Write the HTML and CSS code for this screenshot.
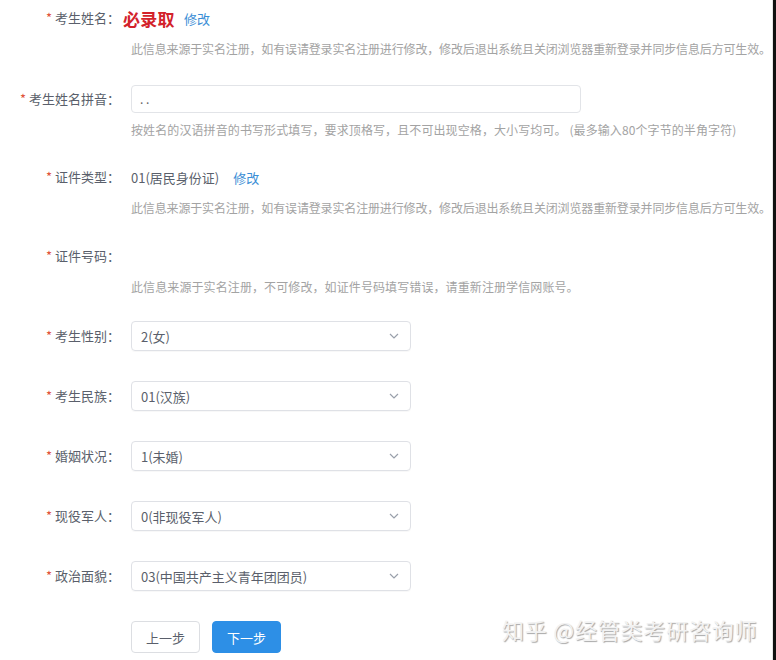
FILE: index.html
```html
<!DOCTYPE html>
<html lang="zh">
<head>
<meta charset="utf-8">
<title>考生信息</title>
<link rel="stylesheet" href="styles.css">
</head>
<body>
<div class="page">
  <form class="form">
    <div class="item item-a">
      <div class="label"><span class="req">*</span> 考生姓名：</div>
      <div class="content">
        <div class="value"><span class="name">必录取</span><a class="link link-a">修改</a></div>
        <div class="help help-long">此信息来源于实名注册，如有误请登录实名注册进行修改，修改后退出系统且关闭浏览器重新登录并同步信息后方可生效。</div>
      </div>
    </div>
    <div class="item item-b">
      <div class="label"><span class="req">*</span> 考生姓名拼音：</div>
      <div class="content">
        <div class="value"><div class="input">. .</div></div>
        <div class="help">按姓名的汉语拼音的书写形式填写，要求顶格写，且不可出现空格，大小写均可。 (最多输入80个字节的半角字符)</div>
      </div>
    </div>
    <div class="item item-c">
      <div class="label"><span class="req">*</span> 证件类型：</div>
      <div class="content">
        <div class="value"><span class="text">01(居民身份证)</span><a class="link link-c">修改</a></div>
        <div class="help help-long">此信息来源于实名注册，如有误请登录实名注册进行修改，修改后退出系统且关闭浏览器重新登录并同步信息后方可生效。</div>
      </div>
    </div>
    <div class="item item-d">
      <div class="label"><span class="req">*</span> 证件号码：</div>
      <div class="content">
        <div class="value"></div>
        <div class="help">此信息来源于实名注册，不可修改，如证件号码填写错误，请重新注册学信网账号。</div>
      </div>
    </div>
    <div class="item item-s">
      <div class="label"><span class="req">*</span> 考生性别：</div>
      <div class="content"><div class="value"><div class="select"><span>2(女)</span><svg class="arrow" width="10" height="6" viewBox="0 0 10 6"><path d="M1 1 L5 5 L9 1" fill="none" stroke="#9aa0ab" stroke-width="1.2"/></svg></div></div></div>
    </div>
    <div class="item item-s">
      <div class="label"><span class="req">*</span> 考生民族：</div>
      <div class="content"><div class="value"><div class="select"><span>01(汉族)</span><svg class="arrow" width="10" height="6" viewBox="0 0 10 6"><path d="M1 1 L5 5 L9 1" fill="none" stroke="#9aa0ab" stroke-width="1.2"/></svg></div></div></div>
    </div>
    <div class="item item-s">
      <div class="label"><span class="req">*</span> 婚姻状况：</div>
      <div class="content"><div class="value"><div class="select"><span>1(未婚)</span><svg class="arrow" width="10" height="6" viewBox="0 0 10 6"><path d="M1 1 L5 5 L9 1" fill="none" stroke="#9aa0ab" stroke-width="1.2"/></svg></div></div></div>
    </div>
    <div class="item item-s">
      <div class="label"><span class="req">*</span> 现役军人：</div>
      <div class="content"><div class="value"><div class="select"><span>0(非现役军人)</span><svg class="arrow" width="10" height="6" viewBox="0 0 10 6"><path d="M1 1 L5 5 L9 1" fill="none" stroke="#9aa0ab" stroke-width="1.2"/></svg></div></div></div>
    </div>
    <div class="item item-s">
      <div class="label"><span class="req">*</span> 政治面貌：</div>
      <div class="content"><div class="value"><div class="select"><span>03(中国共产主义青年团团员)</span><svg class="arrow" width="10" height="6" viewBox="0 0 10 6"><path d="M1 1 L5 5 L9 1" fill="none" stroke="#9aa0ab" stroke-width="1.2"/></svg></div></div></div>
    </div>
    <div class="buttons">
      <button type="button" class="btn">上一步</button>
      <button type="button" class="btn btn-primary">下一步</button>
    </div>
  </form>
  <div class="watermark">知乎 @经管类考研咨询师</div>
</div>
</body>
</html>
```

FILE: styles.css
```css
html, body {
  margin: 0;
  padding: 0;
  background: #111;
}
.page {
  position: relative;
  width: 773px;
  height: 660px;
  background: #fff;
  overflow: hidden;
  border-right: 1px solid #e6e6e6;
  box-sizing: border-box;
  font-family: "Noto Sans CJK SC", "Noto Sans", sans-serif;
  color: #5a5f6b;
  font-size: 13px;
}
.form {
  display: flex;
  flex-direction: column;
  padding-top: 3px;
}
.item {
  display: flex;
  align-items: flex-start;
}
.item-a { margin-bottom: 26px; }
.item-b { margin-bottom: 23px; }
.item-c { margin-bottom: 24px; }
.item-d { margin-bottom: 25px; }
.item-s { margin-bottom: 30px; }
.label {
  width: 120px;
  flex: none;
  text-align: right;
  line-height: 30px;
  height: 30px;
  white-space: nowrap;
  color: #5a5f6b;
}
.req {
  color: #e0533a;
}
.content {
  margin-left: 11px;
  display: flex;
  flex-direction: column;
}
.value {
  height: 30px;
  display: flex;
  align-items: center;
}
.name {
  margin-left: -8px;
  font-size: 17px;
  font-weight: bold;
  color: #d3222a;
  letter-spacing: 0.3px;
}
.link {
  color: #3a8ed6;
  cursor: pointer;
}
.link-a { margin-left: 9px; }
.link-c { margin-left: 14px; }
.text { color: #5a5f6b; }
.help {
  margin-top: 7px;
  line-height: 18px;
  font-size: 12px;
  letter-spacing: 0.1px;
  color: #a3a3a3;
  white-space: nowrap;
}
.help-long {
  letter-spacing: -0.15px;
}
.input {
  width: 450px;
  height: 28px;
  box-sizing: border-box;
  border: 1px solid #e2e4e8;
  border-radius: 4px;
  padding-left: 8px;
  line-height: 26px;
  color: #666;
  font-size: 12px;
}
.select {
  width: 280px;
  height: 30px;
  box-sizing: border-box;
  border: 1px solid #dfe1e6;
  border-radius: 4px;
  padding: 0 10px 0 9px;
  display: flex;
  align-items: center;
  justify-content: space-between;
  color: #5a5f6b;
  box-shadow: 0 1px 1px rgba(0,0,0,0.03);
}
.arrow {
  margin-right: 1px;
}
.buttons {
  display: flex;
  gap: 12px;
  margin-left: 131px;
}
.btn {
  width: 69px;
  height: 32px;
  box-sizing: border-box;
  border: 1px solid #dcdee2;
  border-radius: 4px;
  background: #fff;
  color: #5a5f6b;
  font-family: "Noto Sans CJK SC", "Noto Sans", sans-serif;
  font-size: 13px;
  padding: 0;
}
.btn-primary {
  background: #2d8fe6;
  border-color: #2d8fe6;
  color: #fff;
}
.watermark {
  position: absolute;
  left: 502px;
  top: 613px;
  font-size: 22px;
  line-height: 32px;
  color: #f2f2f2;
  text-shadow: 1px 1px 1px rgba(0,0,0,0.35);
  white-space: nowrap;
  letter-spacing: 0.8px;
}
```
